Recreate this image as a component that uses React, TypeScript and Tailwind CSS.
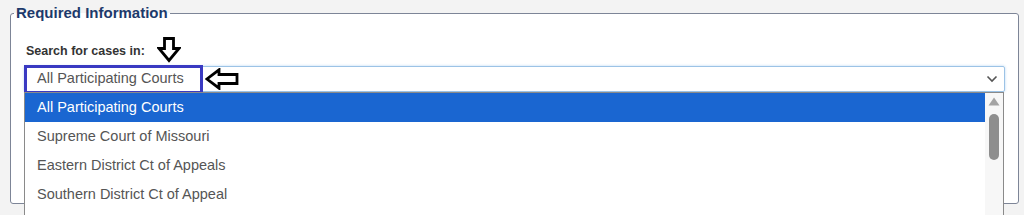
import React from "react"

const OPTIONS = [
    "All Participating Courts",
    "Supreme Court of Missouri",
    "Eastern District Ct of Appeals",
    "Southern District Ct of Appeal",
]

function DownArrow() {
    return (
        <svg width="24" height="26" viewBox="0 0 24 26" fill="none">
            <path d="M7.5 1.5 H16.5 V11.5 H22 L12 23.5 L2 11.5 H7.5 Z" stroke="#000" strokeWidth="2.8" strokeLinejoin="miter" fill="#fff" />
        </svg>
    )
}

function LeftArrow() {
    return (
        <svg width="34" height="22" viewBox="0 0 34 22" fill="none">
            <path d="M32 6.5 H14 V1.8 L2 11 L14 20.2 V15.5 H32 Z" stroke="#000" strokeWidth="2.8" strokeLinejoin="miter" fill="#fff" />
        </svg>
    )
}

export default function App() {
    return (
        <div className="relative w-full h-[215px] overflow-hidden bg-[#f3f3f3] pl-[10px] pr-[5px] pt-[4px] font-['Liberation_Sans',Arial,sans-serif]">
            <fieldset className="h-[200px] border border-[#7d8597] rounded-[3px] bg-white">
                <legend className="ml-[3px] px-[2px] text-[15px] leading-[18px] font-bold text-[#1d3a6c]">
                    Required Information
                </legend>

                <div className="pl-[13px] pr-[13px] pt-[21px]">
                    <label className="block ml-[2px] text-[12.5px] leading-4 font-bold text-[#333]">
                        Search for cases in:
                    </label>

                    {/* Select with open list */}
                    <div className="relative mt-[7px] h-[26px] border border-[#9cc3e6] rounded-[2px] shadow-[0_0_3px_#b9d7f2] flex items-center justify-between pl-[12px] pr-[6px]">
                        <span className="text-[14.5px] text-[#555]">All Participating Courts</span>
                        <svg width="12" height="8" viewBox="0 0 12 8" fill="none">
                            <path d="M1.5 1.5 L6 6 L10.5 1.5" stroke="#555" strokeWidth="1.6" />
                        </svg>

                        {/* focus highlight around the selected text */}
                        <div className="absolute -left-px -top-[2px] w-[179px] h-[29px] border-[3px] border-[#3a3ac2]" />

                        {/* dropdown list */}
                        <div className="absolute -left-px top-[25px] w-[980px] h-[140px] bg-white border border-[#8a8a8a] flex">
                            <ul className="flex-1">
                                {OPTIONS.map((opt, i) => (
                                    <li
                                        key={opt}
                                        className={
                                            i === 0
                                                ? "h-[29px] flex items-center pl-[12px] text-[14.5px] bg-[#1a66d1] text-white"
                                                : "h-[29px] flex items-center pl-[12px] text-[14.5px] text-[#555]"
                                        }
                                    >
                                        {opt}
                                    </li>
                                ))}
                            </ul>
                            <div className="w-[18px] bg-[#f7f7f7] flex flex-col items-center pt-[4px]">
                                <svg width="12" height="9" viewBox="0 0 12 9">
                                    <path d="M6 0.5 L11.5 8.5 H0.5 Z" fill="#a3a3a3" />
                                </svg>
                                <div className="mt-[8px] w-[10px] h-[46px] rounded-full bg-[#8e8e8e]" />
                            </div>
                        </div>
                    </div>
                </div>
            </fieldset>

            {/* annotation arrows */}
            <div className="absolute left-[157px] top-[37px]">
                <DownArrow />
            </div>
            <div className="absolute left-[205px] top-[68px]">
                <LeftArrow />
            </div>
        </div>
    )
}
